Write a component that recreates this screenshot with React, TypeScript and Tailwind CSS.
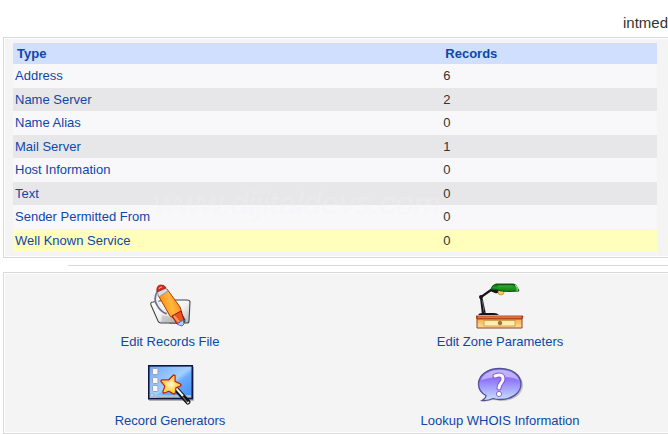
import type { ReactNode } from 'react';

const records = [
  { type: 'Address', count: 6 },
  { type: 'Name Server', count: 2 },
  { type: 'Name Alias', count: 0 },
  { type: 'Mail Server', count: 1 },
  { type: 'Host Information', count: 0 },
  { type: 'Text', count: 0 },
  { type: 'Sender Permitted From', count: 0 },
  { type: 'Well Known Service', count: 0, highlighted: true },
];

function RecordsFileIcon() {
  return (
    <svg width="48" height="48" viewBox="0 0 48 48" aria-hidden="true">
      <defs>
        <linearGradient id="penBody" x1="0" y1="0.3" x2="1" y2="0">
          <stop offset="0" stopColor="#ff8c10" />
          <stop offset="0.45" stopColor="#ffb840" />
          <stop offset="1" stopColor="#f27400" />
        </linearGradient>
        <linearGradient id="sheet" x1="0" y1="0" x2="1" y2="1">
          <stop offset="0" stopColor="#ffffff" />
          <stop offset="0.5" stopColor="#f2f2f2" />
          <stop offset="1" stopColor="#b4b4b4" />
        </linearGradient>
      </defs>
      <path d="M23 18 L41 18 Q44 18 44 20 L43 39 Q43 41 41 41 L24 41Z" fill="url(#sheet)" stroke="#444" strokeWidth="1.1" />
      <path d="M7 20 L27 17 L39 38 Q39 41 36 41 L15 41 Q13 41 12 39 L5 23 Q4 20 7 20Z" fill="url(#sheet)" stroke="#444" strokeWidth="1.1" />
      <path d="M16 33 L29 36 L35 41 L15 41Z" fill="#777" opacity="0.25" />
      <path d="M12 10 Q8 17 12 23 Q15 29 21 31" fill="none" stroke="#6d7188" strokeWidth="3.5" />
      <path d="M13 10 Q9 17 13 23 Q16 28 21 30" fill="none" stroke="#eef0fa" strokeWidth="2" />
      <path d="M12 13 L21 7 L34 25 L36 31 L27 36 L24 34Z" fill="url(#penBody)" stroke="#ad3c00" strokeWidth="1" />
      <path d="M11 10 L19 5 L22 9 L13 15Z" fill="#d9dbe6" stroke="#8c8595" strokeWidth="0.8" />
      <path d="M11 10 Q10 3 15 3 Q19 3 20 6Z" fill="#d9301c" stroke="#8f180e" strokeWidth="0.8" />
      <path d="M13 7 Q13 5 16 5" fill="none" stroke="#ffb29c" />
      <path d="M26 34 L35 29 L38 38 L31 42Z" fill="#f0501a" stroke="#8f180e" strokeWidth="1" />
      <path d="M28 34 L33 40" stroke="#ff9a60" strokeWidth="2" />
      <path d="M31 42 L37 38 L38 42 L36 44 L33 43Z" fill="#b9cdfc" stroke="#4060c8" strokeWidth="0.9" />
    </svg>
  );
}

function ZoneParametersIcon() {
  return (
    <svg width="48" height="48" viewBox="0 0 48 48" aria-hidden="true">
      <defs>
        <linearGradient id="shade" x1="0" y1="0" x2="0" y2="1">
          <stop offset="0" stopColor="#0b5a10" />
          <stop offset="0.45" stopColor="#1f9d22" />
          <stop offset="1" stopColor="#12800f" />
        </linearGradient>
        <linearGradient id="desk" x1="0" y1="0" x2="0" y2="1">
          <stop offset="0" stopColor="#f0a850" />
          <stop offset="1" stopColor="#ffe08c" />
        </linearGradient>
      </defs>
      <path d="M15 8 L5 15 L7 32" fill="none" stroke="#15151b" strokeWidth="2.2" />
      <path d="M6 17 L9 31" stroke="#15151b" strokeWidth="1.4" />
      <path d="M6 18 L8 28" stroke="#8c8c9a" strokeWidth="0.6" />
      <circle cx="5" cy="15" r="2" fill="#15151b" />
      <path d="M14 7 L24 8 Q23 12 19 11 L14 9Z" fill="#15151b" />
      <circle cx="25" cy="10" r="3" fill="#ffc453" stroke="#a9762a" strokeWidth="0.6" />
      <circle cx="26" cy="9" r="1.2" fill="#fff6c8" />
      <path d="M20 2 H37 Q40 2 41 5 L43 9 Q32 10 25 9 Q20 7 15 7 Q16 3 20 2Z" fill="url(#shade)" stroke="#07460a" strokeWidth="0.9" />
      <path d="M22 4 H37" stroke="#57c458" strokeWidth="0.7" />
      <path d="M39 3 Q42 5 41 9" fill="none" stroke="#7fea6d" strokeWidth="1.2" />
      <path d="M2 33 Q3 31 6 31 H18 Q21 31 23 33Z" fill="#15151b" />
      <path d="M1 36 H46 V46 H1Z" fill="url(#desk)" stroke="#8e4322" />
      <path d="M0 34 H47 L46 37 H1Z" fill="#d9541f" stroke="#8b2e12" strokeWidth="0.8" />
      <path d="M2 35 H45" stroke="#ff9a55" strokeWidth="0.8" />
      <rect x="8" y="38.5" width="31" height="5.5" fill="#ffeeb0" stroke="#c9944a" strokeWidth="0.8" />
      <circle cx="24" cy="41" r="1.8" fill="#ad7133" stroke="#704020" strokeWidth="0.6" />
    </svg>
  );
}

function RecordGeneratorsIcon() {
  return (
    <svg width="48" height="48" viewBox="0 0 48 48" aria-hidden="true">
      <defs>
        <linearGradient id="screen" x1="0" y1="0" x2="1" y2="1">
          <stop offset="0" stopColor="#6aa8fa" />
          <stop offset="0.5" stopColor="#a5d0ff" />
          <stop offset="0.6" stopColor="#6aabfc" />
          <stop offset="1" stopColor="#3f8cf8" />
        </linearGradient>
        <radialGradient id="star">
          <stop offset="0" stopColor="#fffbd0" />
          <stop offset="1" stopColor="#ffc81e" />
        </radialGradient>
      </defs>
      <path d="M3 39.5 H47.5 V6" fill="none" stroke="#888" opacity="0.6" />
      <rect x="2.8" y="4.8" width="43.5" height="33" fill="url(#screen)" stroke="#101642" strokeWidth="1.6" />
      {[7, 16, 24].map((y) => (
        <rect key={y} x="6.5" y={y + 0.5} width="5.5" height="6" rx="1" fill="#f5f7fb" stroke="#98a2b2" />
      ))}
      <path d="M4 35 H45" stroke="#b3bdca" strokeWidth="2" />
      <path d="M4 33 H8 L6 37Z" fill="#dbe0e7" stroke="#8e9cb2" strokeWidth="0.6" />
      <path d="M29 27 L42 41" stroke="#111" strokeWidth="5" strokeLinecap="round" />
      <path d="M29 26 L37 35" stroke="#f6f6f6" strokeWidth="2" />
      <path d="M37 36 L41 41" stroke="#777" strokeWidth="1.2" />
      <path d="M41 42 L43 41" stroke="#eee" strokeWidth="1.5" />
      <path d="M28 15 L28 21 L34 24 L29 26 L28 32 L23 29 L18 31 L20 25 L16 20 L23 20Z" fill="url(#star)" stroke="#c61f14" strokeWidth="3.4" strokeLinejoin="round" />
      <path d="M28 15 L28 21 L34 24 L29 26 L28 32 L23 29 L18 31 L20 25 L16 20 L23 20Z" fill="url(#star)" stroke="#ffd84a" strokeWidth="1" strokeLinejoin="round" />
    </svg>
  );
}

function WhoisIcon() {
  return (
    <svg width="48" height="48" viewBox="0 0 48 48" aria-hidden="true">
      <defs>
        <linearGradient id="bubble" x1="0" y1="0" x2="0" y2="1">
          <stop offset="0" stopColor="#9a86f2" />
          <stop offset="0.35" stopColor="#8f76fa" />
          <stop offset="1" stopColor="#c9e4ff" />
        </linearGradient>
      </defs>
      <path d="M25 9 C37 9 47 15 47 24 C47 34 37 40 25 40 L17 39 L7 41 L12 36 C7 33 4 29 4 24 C4 15 13 9 25 9Z" fill="#777" opacity="0.4" />
      <path d="M24 7.5 C36 7.5 45 14 45 23 C45 32 36 38.5 24 38.5 Q20 38.5 17 37.5 Q12 40 6 39.5 Q10 37 10 34.5 C5 32 2.5 28 2.5 23 C2.5 14 12 7.5 24 7.5Z" fill="url(#bubble)" stroke="#54509b" strokeWidth="1.3" />
      <path d="M5 19 C8 12 15 9 24 9 C33 9 40 12 43 19 Q34 15 24 16 Q14 16 5 19Z" fill="#fff" opacity="0.4" />
      <path d="M19 15 Q27 12 27 18 C27 22 23 22 23 27" fill="none" stroke="#8651cd" strokeWidth="5" strokeLinecap="round" />
      <path d="M19 15 Q27 12 27 18 C27 22 23 22 23 27" fill="none" stroke="#fff" strokeWidth="3" strokeLinecap="round" />
      <circle cx="23" cy="33" r="2.6" fill="#fff" stroke="#8968c8" />
    </svg>
  );
}

const tools: { label: string; icon: ReactNode }[] = [
  { label: 'Edit Records File', icon: <RecordsFileIcon /> },
  { label: 'Edit Zone Parameters', icon: <ZoneParametersIcon /> },
  { label: 'Record Generators', icon: <RecordGeneratorsIcon /> },
  { label: 'Lookup WHOIS Information', icon: <WhoisIcon /> },
];

export default function App() {
  return (
    <div className="overflow-hidden bg-white pl-[3px] font-['Liberation_Sans',Arial,sans-serif] text-[13px] leading-[15px] text-[#333]">
      <header className="flex justify-end pt-3.5 pb-[5px] text-[15px] leading-[18px]">
        <h1>intmed</h1>
      </header>

      <main>
        <section className="relative border border-r-0 border-[#d9d9d9] bg-white pt-px pb-px pl-px">
          <div className="bg-[#f4f4f4] pt-1 pr-[11px] pb-1 pl-2">
            <table className="w-full table-fixed border-collapse">
              <thead>
                <tr className="h-[21px] bg-[#d0dffd] text-left text-[#0d47a8]">
                  <th className="w-2/3 py-0 pl-1 font-bold">Type</th>
                  <th className="w-1/3 py-0 pl-[3px] font-bold">Records</th>
                </tr>
              </thead>
              <tbody>
                {records.map((r) => (
                  <tr
                    key={r.type}
                    className={
                      r.highlighted
                        ? 'h-[23px] bg-[#ffffbb]'
                        : 'odd:h-6 odd:bg-[#f8f8fb] even:h-[23px] even:bg-[#e7e7e9]'
                    }
                  >
                    <td className="pt-0 pb-px pl-0.5">
                      <a href="#" className="text-[#0d47a8]">{r.type}</a>
                    </td>
                    <td className="pt-0 pb-px pl-px">{r.count}</td>
                  </tr>
                ))}
              </tbody>
            </table>
          </div>
          <span className="pointer-events-none absolute top-[147px] left-[150px] text-[32px] leading-9 italic text-[#f4f4f4] opacity-25">
            www.dijitaldevs.com
          </span>
        </section>

        <hr className="mt-[7px] mb-1.5 ml-[65px] border-[#d9d9d9]" />

        <section className="border border-r-0 border-[#d9d9d9] bg-white pt-px pb-px pl-px">
          <nav className="grid grid-cols-2 gap-y-3 bg-[#f4f4f4] pt-2 pr-[3px] pb-1">
            {tools.map((t) => (
              <a key={t.label} href="#" className="flex flex-col items-center gap-1 text-[#0d47a8]">
                {t.icon}
                <span>{t.label}</span>
              </a>
            ))}
          </nav>
        </section>
      </main>
    </div>
  );
}
